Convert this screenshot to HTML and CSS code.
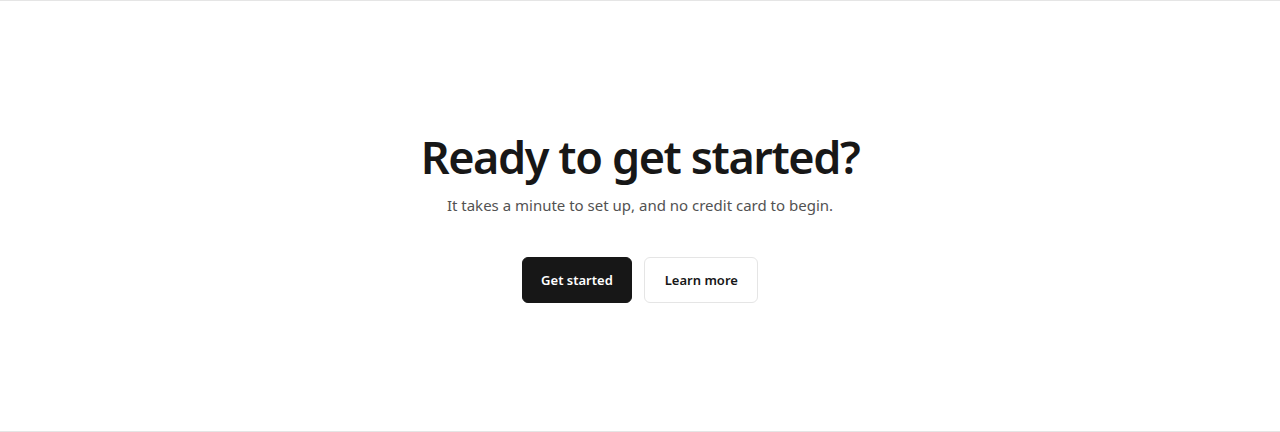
FILE: index.html
```html
<!DOCTYPE html>
<html lang="en">
<head>
<meta charset="utf-8">
<title>Ready to get started?</title>
<link rel="stylesheet" href="styles.css">
</head>
<body>
<section class="cta">
  <h1 class="cta-title">Ready to get started?</h1>
  <p class="cta-sub">It takes a minute to set up, and no credit card to begin.</p>
  <div class="cta-actions">
    <a class="btn btn-primary" href="#">Get started</a>
    <a class="btn btn-outline" href="#">Learn more</a>
  </div>
</section>
</body>
</html>
```
FILE: styles.css
```css
html, body {
  margin: 0;
  padding: 0;
  background: #ffffff;
}
body {
  font-family: "Noto Sans", "Open Sans", sans-serif;
  color: #171717;
}
.cta {
  box-sizing: border-box;
  height: 432px;
  border-top: 1px solid #e5e5e5;
  border-bottom: 1px solid #e5e5e5;
  display: flex;
  flex-direction: column;
  align-items: center;
  justify-content: center;
  text-align: center;
}
.cta-title {
  margin: 0;
  font-size: 45px;
  font-weight: 600;
  line-height: 54px;
  letter-spacing: -1.4px;
  color: #171717;
}
.cta-sub {
  margin: 9px 0 0;
  font-size: 15px;
  line-height: 24px;
  color: #525252;
}
.cta-actions {
  margin-top: 40px;
  display: flex;
  gap: 12px;
}
.btn {
  box-sizing: border-box;
  display: inline-flex;
  align-items: center;
  justify-content: center;
  height: 46px;
  border-radius: 6px;
  font-size: 13px;
  font-weight: 600;
  text-decoration: none;
}
.btn-primary {
  padding: 0 18.5px;
  background: #171717;
  color: #ffffff;
  border: 1px solid #171717;
}
.btn-outline {
  padding: 0 19.5px;
  background: #ffffff;
  color: #171717;
  border: 1px solid #e5e5e5;
}
```
